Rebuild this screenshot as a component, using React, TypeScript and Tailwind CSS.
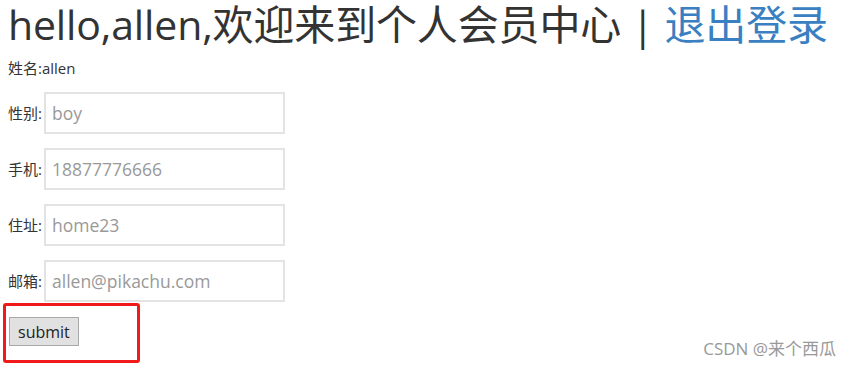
import React from "react";

const fields = [
  { label: "性别:", value: "boy" },
  { label: "手机:", value: "18877776666" },
  { label: "住址:", value: "home23" },
  { label: "邮箱:", value: "allen@pikachu.com" },
];

export default function App() {
  return (
    <div
      className="relative w-[852px] h-[368px] bg-white text-[#333]"
      style={{ fontFamily: '"Open Sans", "Noto Sans CJK SC", sans-serif' }}
    >
      <div className="pl-[8px]">
        <h1 className="text-[41px] leading-[48px] whitespace-nowrap tracking-[-0.15px]">
          hello,allen,欢迎来到个人会员中心 | <a className="text-[#3a7fc1]">退出登录</a>
        </h1>
        <p className="text-[15px] mt-[9px] leading-[22px]">姓名:allen</p>
        <div className="flex flex-col gap-[14px] mt-[13px]">
          {fields.map((f) => (
            <div key={f.label} className="flex items-center">
              <span className="text-[15px] w-[36px] whitespace-nowrap">{f.label}</span>
              <input
                readOnly
                placeholder={f.value}
                className="w-[241px] h-[42px] border-2 border-[#e3e3e3] px-[6px] text-[17.5px] placeholder:text-[#999] outline-none"
              />
            </div>
          ))}
        </div>
        <div className="mt-[1px] -ml-[5px] w-[137px] h-[60px] border-[3px] border-[#f01a1a] rounded-[3px] pt-[11px] pl-[3px]">
          <button className="h-[29px] px-[8px] bg-[#e1e1e1] border border-[#a9a9a9] text-[16px] leading-[20px] text-[#222]">
            submit
          </button>
        </div>
      </div>
      <div className="absolute right-[16px] bottom-[7px] text-[17px] text-[#999]">
        CSDN @来个西瓜
      </div>
    </div>
  );
}
